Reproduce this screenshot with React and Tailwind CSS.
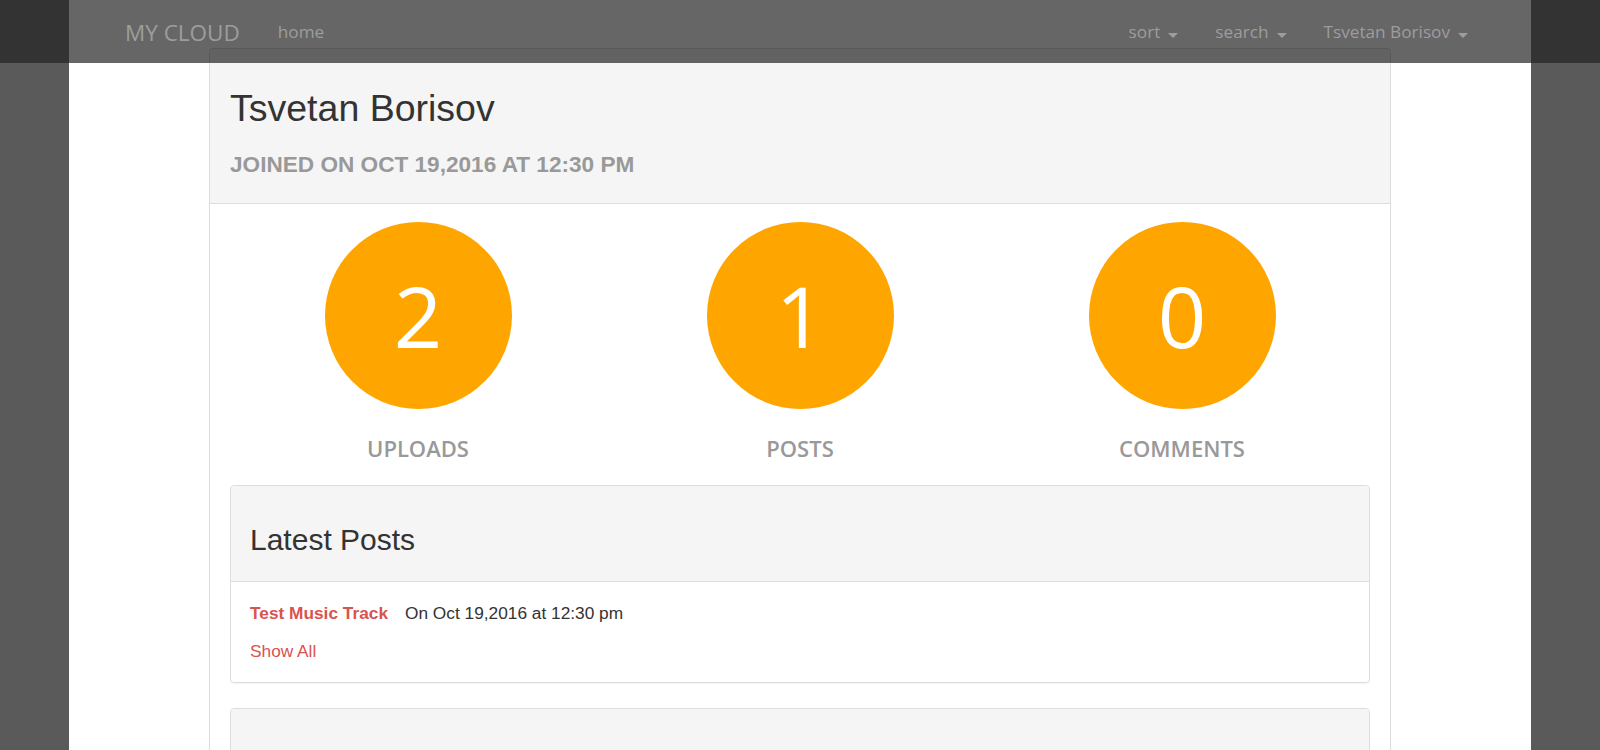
import React from "react";

const sans = "font-['Liberation_Sans',Arial,sans-serif]";
const open = "font-['Open_Sans',sans-serif]";

function Caret() {
  return (
    <span className="inline-block w-0 h-0 ml-[8px] mb-[2px] border-x-[5px] border-x-transparent border-t-[5px] border-t-[#9d9d9d]" />
  );
}

function Stat({ value, label }) {
  return (
    <div className="flex flex-col items-center">
      <div className={`w-[187px] h-[187px] rounded-full bg-[#ffa500] flex items-center justify-center text-white text-[85px] leading-none ${open}`}>
        {value}
      </div>
      <div className={`mt-[24px] text-[22px] leading-[30px] font-semibold text-[#999] uppercase ${open}`}>{label}</div>
    </div>
  );
}

export default function App() {
  return (
    <div className="relative h-[750px] overflow-hidden bg-[#5a5a5a]">
      <div className="mx-auto w-[1462px] min-h-[750px] bg-white pt-[48px]">
        <div className={`mx-auto w-[1182px] border border-[#ddd] rounded-[4px] bg-white ${sans}`}>
          <div className="bg-[#f5f5f5] border-b border-[#ddd] rounded-t-[4px] px-[20px] pt-[39px] pb-[25px]">
            <div className="text-[37.5px] leading-[40px] text-[#333]">Tsvetan Borisov</div>
            <div className="mt-[24px] text-[22.6px] leading-[26px] font-bold text-[#999]">JOINED ON OCT 19,2016 AT 12:30 PM</div>
          </div>
          <div className="px-[20px] pt-[18px]">
            <div className="grid grid-cols-3 -mx-[3px]">
              <Stat value="2" label="Uploads" />
              <Stat value="1" label="Posts" />
              <Stat value="0" label="Comments" />
            </div>
            <div className="mt-[22px] border border-[#ddd] rounded-[4px] shadow-[0_1px_1px_rgba(0,0,0,0.05)]">
              <div className="bg-[#f5f5f5] border-b border-[#ddd] rounded-t-[4px] px-[19px] pt-[37px] pb-[25px]">
                <div className="text-[30px] leading-[33px] text-[#333]">Latest Posts</div>
              </div>
              <div className="px-[19px] pt-[19px] pb-[19px] text-[17.3px]">
                <div className="leading-[24px] flex">
                  <span className="font-bold text-[#d9534f]">Test Music Track</span>
                  <span className="ml-[17px] text-[#333]">On Oct 19,2016 at 12:30 pm</span>
                </div>
                <div className="mt-[14px] leading-[24px] text-[#d9534f]">Show All</div>
              </div>
            </div>
            <div className="mt-[25px] border border-[#ddd] rounded-[4px] shadow-[0_1px_1px_rgba(0,0,0,0.05)]">
              <div className="bg-[#f5f5f5] h-[100px] rounded-t-[4px]" />
            </div>
          </div>
        </div>
      </div>

      <div className="absolute top-0 left-0 right-0 h-[63px] flex">
        <div className="w-[69px] bg-[#333]" />
        <div className={`flex-1 bg-black/60 flex items-center pl-[56px] pr-[63px] text-[#9d9d9d] ${open}`}>
          <span className="mt-[2px] text-[22.5px] leading-[30px]">MY CLOUD</span>
          <span className="ml-[38px] text-[17.2px] leading-[24px]">home</span>
          <div className="ml-auto flex items-center gap-[37px] text-[17.2px] leading-[24px]">
            <span className="flex items-baseline">sort<Caret /></span>
            <span className="flex items-baseline">search<Caret /></span>
            <span className="flex items-baseline">Tsvetan Borisov<Caret /></span>
          </div>
        </div>
        <div className="w-[69px] bg-[#333]" />
      </div>
    </div>
  );
}
